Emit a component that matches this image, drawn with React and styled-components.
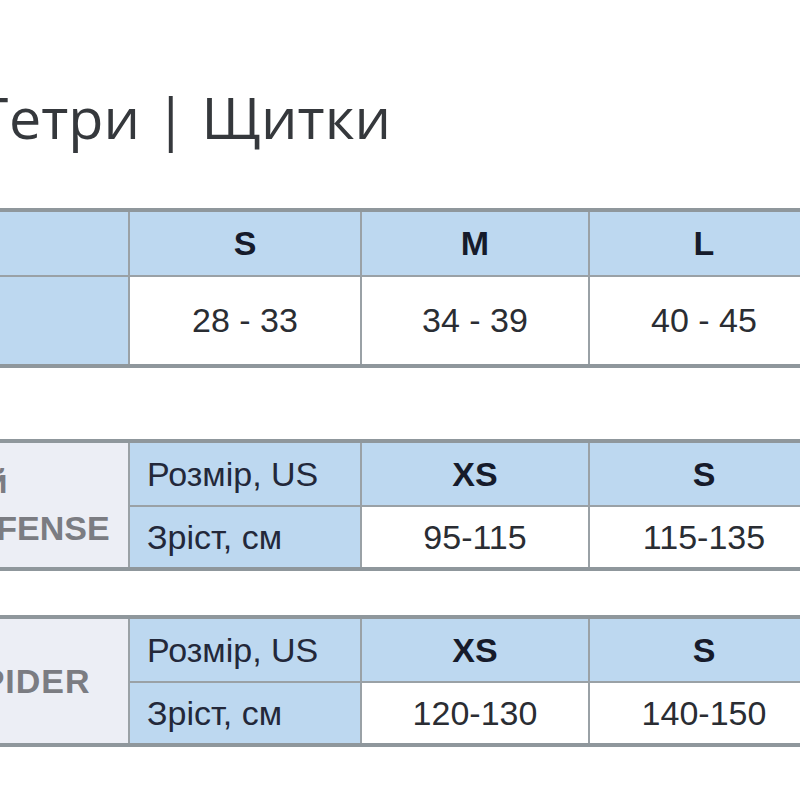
import React from "react";
import styled, { createGlobalStyle } from "styled-components";

const GlobalStyle = createGlobalStyle`
  html, body {
    margin: 0;
    background: #fff;
    overflow: hidden;
  }
`;

const sizeTable = {
  sizes: ["S", "M", "L", "XL"],
  values: ["28 - 33", "34 - 39", "40 - 45", "46 - 50"],
};

const guardTables = [
  {
    name: ["Мій", "DEFENSE"],
    pad: 147,
    sizes: ["XS", "S", "M", "L"],
    heights: ["95-115", "115-135", "135-155", "155-175"],
    gap: 71,
  },
  {
    name: ["SPIDER"],
    pad: 156,
    sizes: ["XS", "S", "M", "L"],
    heights: ["120-130", "140-150", "150-160", "160-170"],
    gap: 44,
  },
];

const Page = styled.div`
  width: 1260px;
  margin-left: -200px;
  padding-top: 87px;
  font-family: "Liberation Sans", Arial, sans-serif;
`;

const Title = styled.h1`
  margin: 0 0 61px;
  padding-left: 179px;
  font-family: "Open Sans", "Noto Sans", sans-serif;
  font-weight: 400;
  font-size: 57.5px;
  line-height: 60px;
  color: #35383c;
`;

const Table = styled.table`
  width: 1260px;
  table-layout: fixed;
  border-collapse: collapse;
  margin-top: ${({ $gap }) => $gap || 0}px;
  border-top: 4px solid #8f979c;
  border-bottom: 4px solid #8f979c;
`;

const Row = styled.tr`
  height: ${({ $h }) => $h}px;
`;

const Cell = styled.td`
  padding: 0;
  border: 2px solid #9aa1a6;
  border-top: none;
  background: ${({ $tone }) =>
    $tone === "blue" ? "#bdd8f0" : $tone === "grey" ? "#eceef5" : "#fff"};
  font-size: 34px;
  color: #2a2d33;
  text-align: center;
  vertical-align: middle;
  white-space: nowrap;
`;

const HeadCell = styled(Cell)`
  font-weight: 700;
  color: #161b2b;
`;

const LabelCell = styled(Cell)`
  text-align: left;
  padding-left: 17px;
  color: #23283a;
`;

const NameCell = styled(Cell)`
  text-align: left;
  padding-left: ${({ $pad }) => $pad}px;
  font-weight: 700;
  color: #7b7c82;
  line-height: 47px;
  letter-spacing: ${({ $wide }) => ($wide ? "1px" : "0")};
`;

const Cols = () => (
  <colgroup>
    <col style={{ width: 328 }} />
    <col style={{ width: 232 }} />
    <col style={{ width: 228 }} />
    <col style={{ width: 230 }} />
    <col style={{ width: 242 }} />
  </colgroup>
);

export default function App() {
  return (
    <>
      <GlobalStyle />
      <Page>
        <Title>Гетри | Щитки</Title>

        <Table>
          <Cols />
          <tbody>
            <Row $h={66}>
              <Cell $tone="blue" />
              {sizeTable.sizes.map((s) => (
                <HeadCell key={s} $tone="blue">{s}</HeadCell>
              ))}
            </Row>
            <Row $h={90}>
              <Cell $tone="blue" />
              {sizeTable.values.map((v) => (
                <Cell key={v}>{v}</Cell>
              ))}
            </Row>
          </tbody>
        </Table>

        {guardTables.map((t) => (
          <Table key={t.name.join(" ")} $gap={t.gap}>
            <Cols />
            <tbody>
              <Row $h={65}>
                <NameCell
                  rowSpan={2}
                  $tone="grey"
                  $pad={t.pad}
                  $wide={t.name.length === 1}
                >
                  {t.name.map((line) => (
                    <div key={line}>{line}</div>
                  ))}
                </NameCell>
                <LabelCell $tone="blue">Розмір, US</LabelCell>
                {t.sizes.map((s) => (
                  <HeadCell key={s} $tone="blue">{s}</HeadCell>
                ))}
              </Row>
              <Row $h={63}>
                <LabelCell $tone="blue">Зріст, см</LabelCell>
                {t.heights.map((h) => (
                  <Cell key={h}>{h}</Cell>
                ))}
              </Row>
            </tbody>
          </Table>
        ))}
      </Page>
    </>
  );
}
